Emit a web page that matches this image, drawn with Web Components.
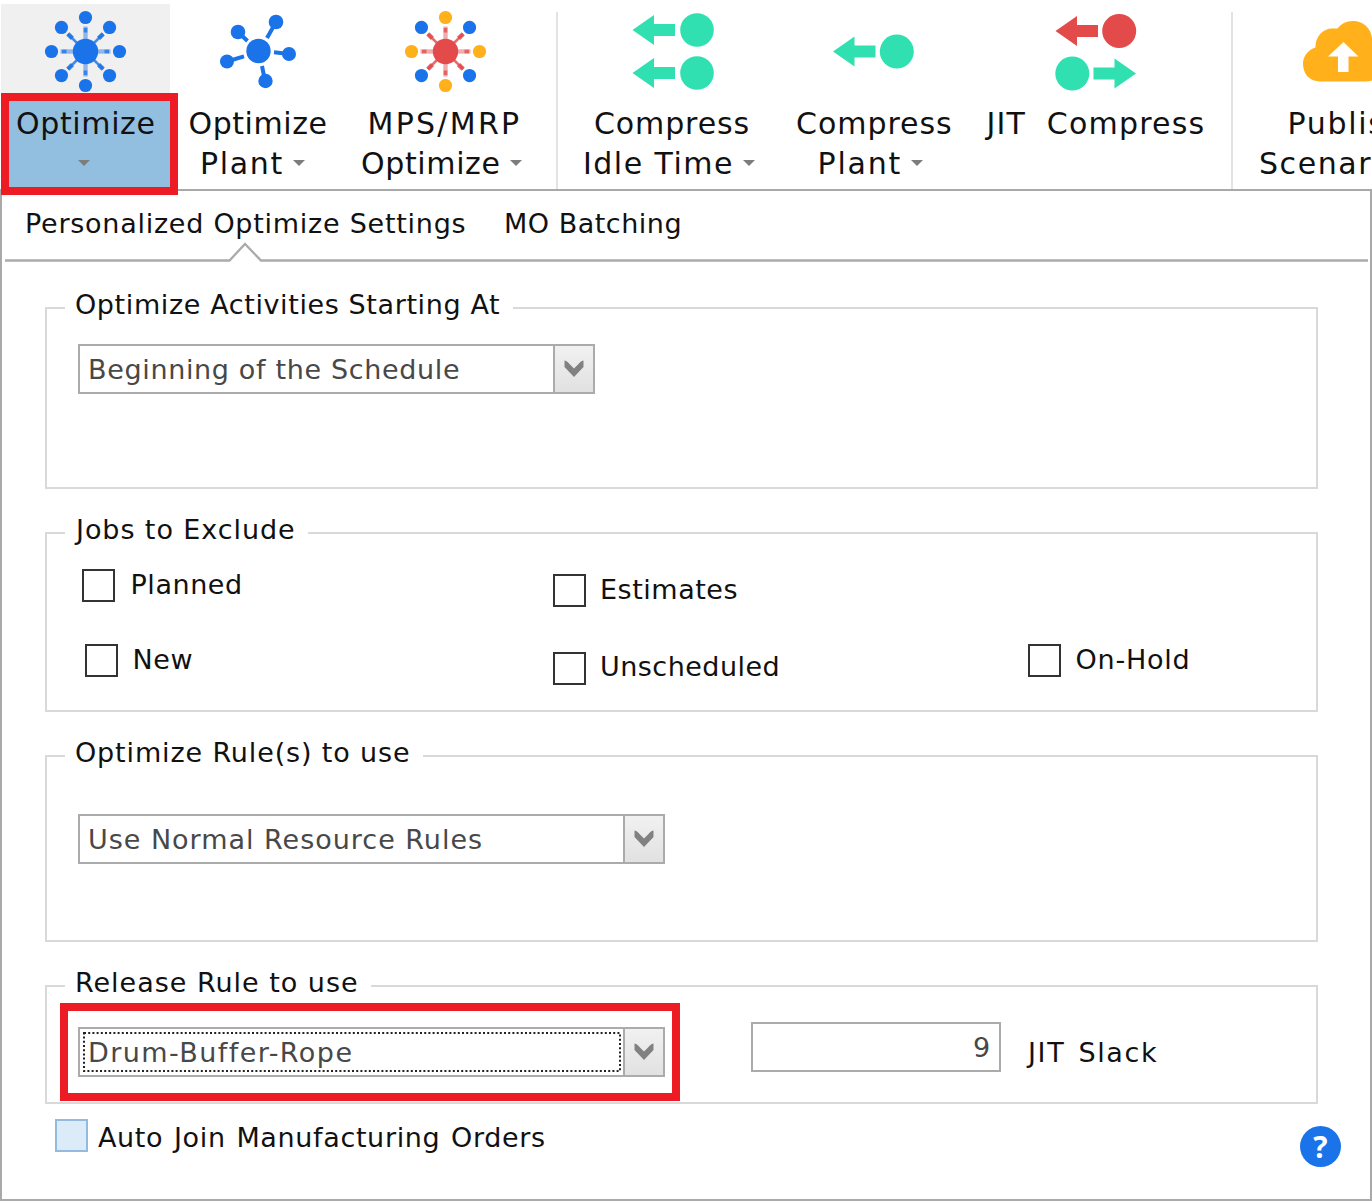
<!DOCTYPE html>
<html lang="en">
<head>
<meta charset="utf-8">
<title>Optimize Settings</title>
<style>
html,body{margin:0;padding:0;background:#fff;overflow:hidden}
body{width:1372px;height:1201px;font-family:"DejaVu Sans",Verdana,sans-serif;font-size:27px;color:#111}
</style>
</head>
<body>
<optimize-app></optimize-app>
<script>
const make = (host, html) => { host.attachShadow({mode:'open'}).innerHTML = html; };
const ctx = document.createElement('canvas').getContext('2d');

/* One line of text tracked so that its visible width equals the w attribute; ws widens the word gaps */
class FitText extends HTMLElement {
  connectedCallback() {
    if (this.shadowRoot) return;
    make(this, `<style>:host{display:block;height:40px;line-height:40px;white-space:nowrap;flex:none}
      span{display:block}</style><span><slot></slot></span>`);
    const text = this.textContent, cs = getComputedStyle(this);
    ctx.font = `${cs.fontSize} ${cs.fontFamily}`;
    const m = ctx.measureText(text);
    const ink = m.actualBoundingBoxRight + m.actualBoundingBoxLeft;
    const w = parseFloat(this.getAttribute('w'));
    const ws = parseFloat(this.getAttribute('ws') || 0);
    const gaps = text.split(' ').length - 1;
    this.style.width = w + 'px';
    const span = this.shadowRoot.querySelector('span');
    span.style.wordSpacing = ws + 'px';
    if (text.length > 1) span.style.letterSpacing = ((w - ink - ws * gaps) / (text.length - 1)).toFixed(3) + 'px';
    span.style.marginLeft = m.actualBoundingBoxLeft + 'px';
  }
}

const BLUE='#1a73e8', RED='#e34a4a', GREEN='#30e0b0', AMBER='#ffb01a';
const hub = (cx, cy, main, card, diag) => {
  let s = '';
  for (let a = 0; a < 360; a += 90) s += `<g transform="translate(${cx} ${cy}) rotate(${a})">
    <path d="M12 0H25" stroke="${main}" stroke-width="4.400" opacity=".45"/><path d="M19 0H23.500" stroke="${main}" stroke-width="3.6" opacity=".75"/>
    <circle cx="34" r="6.6" fill="${card}"/></g>`;
  for (let a = 45; a < 360; a += 90) s += `<g transform="translate(${cx} ${cy}) rotate(${a})">
    <path d="M12 0H25" stroke="${main}" stroke-width="2.6" opacity=".8"/><path d="M18.500 0H25" stroke="${main}" stroke-width="4.400" opacity=".85"/>
    <circle cx="34" r="6.6" fill="${diag}"/></g>`;
  return s + `<circle cx="${cx}" cy="${cy}" r="12.7" fill="${main}"/>`;
};
const arrow = (tip, y, dir, c) =>
  `<path d="M${tip} ${y}l${dir*21.5} -15v9h${dir*21}v12h${-dir*21}v9z" fill="${c}"/>`;
const dot = (x, y, r, c) => `<circle cx="${x}" cy="${y}" r="${r}" fill="${c}"/>`;
const ICONS = {
  optimize: hub(85.5, 51.5, BLUE, BLUE, BLUE),
  plant: `<path d="M276 22L267 38M238 32L247.500 41M227 61.500L244 56.300M289 54L274 52.300M265 81L262 66" stroke="${BLUE}" stroke-width="4"/>`
    + dot(258.5,51,12.2,BLUE)+dot(276,22,7.3,BLUE)+dot(238,32,7.3,BLUE)+dot(227,61.5,7,BLUE)+dot(289,54,7,BLUE)+dot(265.5,81,7.2,BLUE),
  mps: hub(445.5, 51.5, RED, AMBER, BLUE),
  idle: arrow(632.5,30,1,GREEN)+dot(697,30,16.8,GREEN)+arrow(632.5,73,1,GREEN)+dot(697,73,16.8,GREEN),
  cplant: arrow(833,51.5,1,GREEN)+dot(896.8,51.5,17,GREEN),
  jit: arrow(1055.5,31,1,RED)+dot(1119.2,31,17,RED)+dot(1072.3,73.5,17,GREEN)+arrow(1136,73.5,-1,GREEN),
  cloud: `<path d="M1320 81.500C1309 81.500 1303 73 1303 64C1303 56 1308 50 1315.500 47.500C1315 37 1323 28.500 1332 28.500H1337.500C1341 24 1346 21 1353 21C1363 21 1371 28 1372 38C1380 42 1384 52 1384 62C1384 73 1376 81.500 1366 81.500Z" fill="${AMBER}"/>
    <path d="M1343.500 42L1358.500 56.500H1348.500V72H1338V56.500H1328Z" fill="#fff"/>`
};

class RibbonButton extends HTMLElement {
  connectedCallback() {
    const x = +this.getAttribute('x'), w = +this.getAttribute('width');
    make(this, `<style>
      :host{display:flex;flex-direction:column;flex:none;width:${w}px;height:189px;font-size:30px;overflow:hidden}
      svg{display:block;flex:none;height:104px}
      .labels{display:flex;flex-direction:column;height:85px;flex:none}
      :host([active]){background:linear-gradient(90deg,#fff 1px,transparent 1px,transparent 170px,#fff 170px),linear-gradient(#fff 4px,#f0f0f0 4px,#f0f0f0 98px,#92bfdf 98px)}
    </style>
    <svg width="${w}" viewBox="${x} 0 ${w} 104">${ICONS[this.getAttribute('icon')]}</svg>
    <div class="labels"><slot></slot></div>`);
  }
}

class DropLine extends HTMLElement {
  connectedCallback() {
    make(this, `<style>:host{display:flex;height:40px;align-items:flex-start}
      i{width:0;height:0;margin:16px 0 0 var(--gap,10.5px);border:6.5px solid transparent;border-top:6.5px solid #7d7d7d;border-bottom:0;flex:none}
    </style><slot></slot><i></i>`);
  }
}

class RibbonBar extends HTMLElement {
  connectedCallback() {
    make(this, `<style>:host{display:flex;height:189px;width:1372px;overflow:hidden}
      .sep{width:2px;flex:none;margin-top:12px;background:#e3e3e3}
    </style>
    <ribbon-button active icon="optimize" x="0" width="172">
      <fit-text w="136.500" style="margin-left:17px">Optimize</fit-text>
      <drop-line style="--gap:78px"></drop-line></ribbon-button>
    <ribbon-button icon="plant" x="172" width="174">
      <fit-text w="136" style="margin-left:17.500px">Optimize</fit-text>
      <drop-line style="margin-left:30px"><fit-text w="80.500">Plant</fit-text></drop-line></ribbon-button>
    <ribbon-button icon="mps" x="346" width="210">
      <fit-text w="149.500" style="margin-left:23.500px">MPS/MRP</fit-text>
      <drop-line style="margin-left:16px;--gap:11px"><fit-text w="136.500">Optimize</fit-text></drop-line></ribbon-button>
    <div class="sep"></div>
    <ribbon-button icon="idle" x="558" width="226">
      <fit-text w="153.500" style="margin-left:37px">Compress</fit-text>
      <drop-line style="margin-left:27px;--gap:12px"><fit-text w="146">Idle Time</fit-text></drop-line></ribbon-button>
    <ribbon-button icon="cplant" x="784" width="182">
      <fit-text w="154" style="margin-left:13px">Compress</fit-text>
      <drop-line style="margin-left:35.500px;--gap:10px"><fit-text w="81">Plant</fit-text></drop-line></ribbon-button>
    <ribbon-button icon="jit" x="966" width="265">
      <fit-text w="219" ws="10" style="margin-left:18.500px">JIT Compress</fit-text></ribbon-button>
    <div class="sep"></div>
    <ribbon-button icon="cloud" x="1233" width="139">
      <fit-text w="113" style="margin-left:56.500px">Publish</fit-text>
      <fit-text w="139" style="margin-left:27px">Scenario</fit-text></ribbon-button>`);
  }
}

class TabStrip extends HTMLElement {
  connectedCallback() {
    make(this, `<style>:host{display:block;height:73px}
      .row{display:flex;height:38px;padding:13px 0 0 25px;gap:41.500px}
      svg{display:block}</style>
      <div class="row"><fit-text w="437.500">Personalized Optimize Settings</fit-text><fit-text w="173.500">MO Batching</fit-text></div>
      <svg width="1368" height="22" viewBox="2 242 1368 22"><path d="M5 260.500H229.500L245 244L261 260.500H1368" fill="none" stroke="#ababab" stroke-width="2.300"/></svg>`);
  }
}

class GroupBox extends HTMLElement {
  connectedCallback() {
    const lw = +this.getAttribute('lw'), dx = +(this.getAttribute('dx') || 0);
    make(this, `<style>:host{display:block;box-sizing:border-box;width:1273px;margin-left:43px;border:2px solid #d9d9d9}
      .legend{width:${lw + 14}px;padding-left:11px;margin:-24px 0 -16px 18px;height:40px;background:#fff}
      fit-text{margin-left:${dx}px}
      .body{display:flex;align-items:flex-start}</style>
      <div class="legend"><fit-text w="${lw - dx}">${this.getAttribute('legend')}</fit-text></div>
      <div class="body"><slot></slot></div>`);
  }
}

class ComboBox extends HTMLElement {
  connectedCallback() {
    make(this, `<style>:host{display:flex;box-sizing:border-box;height:50px;border:2px solid #ababab;background:#fff;color:#484848;flex:none}
      .value{flex:1;padding:4px 0 0 10px;height:42px}
      :host([focused]) .value{position:relative}
      .focus{position:absolute;left:3px;top:3px}
      .btn{width:38px;border-left:2px solid #ababab;background:linear-gradient(#f1f1f1,#e1e1e1)}
      .btn svg{display:block}</style>
      <div class="value"><slot></slot>${this.hasAttribute('focused') ? '<svg class="focus" width="538" height="40"><rect x="1" y="1" width="536" height="38" fill="none" stroke="#222" stroke-width="2" stroke-dasharray="2 2.200"/></svg>' : ''}</div>
      <div class="btn"><svg width="38" height="46" viewBox="0 0 38 46"><path d="M9.500 14.500C12 15 13.500 16.500 14.500 18L19 22.500L23.500 18C24.500 16.500 26 15 28.500 14.500V21L19 31L9.500 21Z" fill="#818181"/></svg></div>`);
  }
}

class CheckOption extends HTMLElement {
  connectedCallback() {
    make(this, `<style>:host{display:flex;height:33px;gap:var(--gap,16px)}
      b{box-sizing:border-box;width:33px;height:33px;border:2px solid #333;background:#fff;flex:none}
      :host([hot]) b{border-color:#93bbdf;background:#dbebf8}
      slot{display:block;margin-top:var(--ty,-4px)}</style><b></b><slot></slot>`);
  }
}

class NumberBox extends HTMLElement {
  connectedCallback() {
    make(this, `<style>:host{display:flex;justify-content:flex-end;box-sizing:border-box;width:250px;height:50px;border:2px solid #ababab;padding:4px 10.500px 0 0;color:#484848;flex:none}</style><slot></slot>`);
  }
}

class HelpBadge extends HTMLElement {
  connectedCallback() {
    make(this, `<style>:host{display:flex;width:41px;height:41px;border-radius:50%;background:#1a73e8;color:#fff;align-items:center;justify-content:center;font:bold 30px/38px "Open Sans",sans-serif}</style><span>?</span>`);
  }
}

class OptimizeApp extends HTMLElement {
  connectedCallback() {
    make(this, `<style>
      :host{display:block;position:relative;width:1372px;height:1201px;overflow:hidden}
      .panel{box-sizing:border-box;height:1012px;border:2px solid #a9a9a9;background:#fff}
      .col{display:flex;flex-direction:column;flex:none}
      .foot{display:flex;justify-content:space-between;padding:15px 29px 0 53px}
      .mark{position:absolute;box-sizing:border-box;border:8px solid #ed1c24;pointer-events:none}
    </style>
    <ribbon-bar></ribbon-bar>
    <div class="panel">
      <tab-strip></tab-strip>
      <group-box legend="Optimize Activities Starting At" lw="423" style="height:182px;margin-top:43px">
        <combo-box style="width:517px;margin:35px 0 0 31px"><fit-text w="369">Beginning of the Schedule</fit-text></combo-box>
      </group-box>
      <group-box legend="Jobs to Exclude" lw="218" dx="-2" style="height:180px;margin-top:43px">
        <div class="col" style="width:471px;padding:35px 0 0 35px;gap:42px">
          <check-option style="--gap:17.500px"><fit-text w="107.500">Planned</fit-text></check-option>
          <check-option style="margin-left:3px;--gap:16.500px"><fit-text w="57">New</fit-text></check-option>
        </div>
        <div class="col" style="width:475px;padding-top:40px;gap:45px">
          <check-option><fit-text w="134.500">Estimates</fit-text></check-option>
          <check-option style="--ty:-5px"><fit-text w="175.500">Unscheduled</fit-text></check-option>
        </div>
        <div class="col" style="padding-top:110px">
          <check-option style="--gap:15.500px"><fit-text w="111">On-Hold</fit-text></check-option>
        </div>
      </group-box>
      <group-box legend="Optimize Rule(s) to use" lw="333" style="height:187px;margin-top:43px">
        <combo-box style="width:587px;margin:57px 0 0 31px"><fit-text w="391">Use Normal Resource Rules</fit-text></combo-box>
      </group-box>
      <group-box legend="Release Rule to use" lw="281" dx="1" style="height:119px;margin-top:43px">
        <combo-box focused style="width:587px;margin:40px 0 0 31px"><fit-text w="261">Drum-Buffer-Rope</fit-text></combo-box>
        <number-box style="margin:35px 0 0 86px"><fit-text w="14.500">9</fit-text></number-box>
        <fit-text w="131" ws="3" style="margin:46px 0 0 25px">JIT Slack</fit-text>
      </group-box>
      <div class="foot">
        <check-option hot style="--gap:10px;--ty:-1px"><fit-text w="446" ws="1.500">Auto Join Manufacturing Orders</fit-text></check-option>
        <help-badge style="margin-top:7px"></help-badge>
      </div>
    </div>
    <div class="mark" style="left:1px;top:93px;width:177px;height:102px"></div>
    <div class="mark" style="left:60px;top:1003px;width:620px;height:98px"></div>`);
  }
}
Object.entries({'fit-text':FitText,'drop-line':DropLine,'ribbon-button':RibbonButton,'ribbon-bar':RibbonBar,'tab-strip':TabStrip,'group-box':GroupBox,'combo-box':ComboBox,'check-option':CheckOption,'number-box':NumberBox,'help-badge':HelpBadge,'optimize-app':OptimizeApp})
  .forEach(([n, c]) => customElements.define(n, c));
</script>
</body>
</html>
